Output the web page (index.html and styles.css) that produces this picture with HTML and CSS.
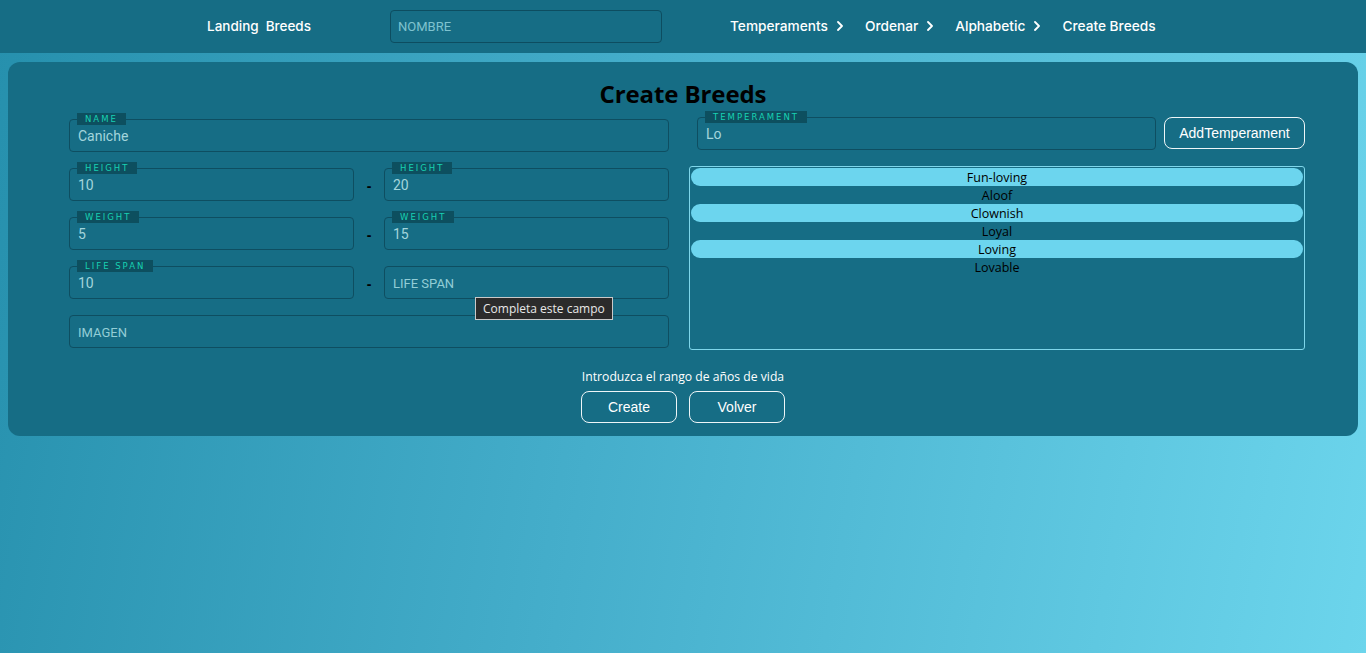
FILE: index.html
```html
<!DOCTYPE html>
<html lang="es">
<head>
<meta charset="utf-8">
<title>Create Breeds</title>
<link rel="stylesheet" href="styles.css">
</head>
<body>
<header class="topbar">
  <div class="brand">
    <span>Landing</span>
    <span>Breeds</span>
  </div>
  <input class="search" type="text" placeholder="NOMBRE">
  <nav class="nav">
    <span class="nav-item">Temperaments <svg class="chev" viewBox="0 0 6 10" width="6" height="10"><path d="M1 1l4 4-4 4" fill="none" stroke="#fff" stroke-width="1.8" stroke-linecap="round" stroke-linejoin="round"/></svg></span>
    <span class="nav-item">Ordenar <svg class="chev" viewBox="0 0 6 10" width="6" height="10"><path d="M1 1l4 4-4 4" fill="none" stroke="#fff" stroke-width="1.8" stroke-linecap="round" stroke-linejoin="round"/></svg></span>
    <span class="nav-item">Alphabetic <svg class="chev" viewBox="0 0 6 10" width="6" height="10"><path d="M1 1l4 4-4 4" fill="none" stroke="#fff" stroke-width="1.8" stroke-linecap="round" stroke-linejoin="round"/></svg></span>
    <span class="nav-item">Create Breeds</span>
  </nav>
</header>

<main class="page">
  <section class="card">
    <h1 class="title">Create Breeds</h1>
    <div class="form-grid">
      <div class="col-left">
        <div class="field">
          <span class="tag">Name</span>
          <input class="inp" type="text" value="Caniche">
        </div>
        <div class="pair">
          <div class="field"><span class="tag">Height</span><input class="inp" type="text" value="10"></div>
          <span class="dash">-</span>
          <div class="field"><span class="tag">Height</span><input class="inp" type="text" value="20"></div>
        </div>
        <div class="pair">
          <div class="field"><span class="tag">Weight</span><input class="inp" type="text" value="5"></div>
          <span class="dash">-</span>
          <div class="field"><span class="tag">Weight</span><input class="inp" type="text" value="15"></div>
        </div>
        <div class="pair">
          <div class="field"><span class="tag">Life span</span><input class="inp" type="text" value="10"></div>
          <span class="dash">-</span>
          <div class="field">
            <input class="inp" type="text" placeholder="LIFE SPAN">
            <span class="tooltip">Completa este campo</span>
          </div>
        </div>
        <div class="field">
          <input class="inp" type="text" placeholder="IMAGEN">
        </div>
      </div>
      <div class="col-right">
        <div class="temp-row">
          <div class="field temp-field">
            <span class="tag">Temperament</span>
            <input class="inp" type="text" value="Lo">
          </div>
          <button class="btn btn-add">AddTemperament</button>
        </div>
        <ul class="list">
          <li class="hl">Fun-loving</li>
          <li>Aloof</li>
          <li class="hl">Clownish</li>
          <li>Loyal</li>
          <li class="hl">Loving</li>
          <li>Lovable</li>
        </ul>
      </div>
    </div>
    <p class="hint">Introduzca el rango de años de vida</p>
    <div class="actions">
      <button class="btn btn-act">Create</button>
      <button class="btn btn-act">Volver</button>
    </div>
  </section>
</main>
</body>
</html>
```

FILE: styles.css
```css
* { box-sizing: border-box; }

html, body { height: 100%; }

body {
  margin: 0;
  min-height: 653px;
  background: linear-gradient(100deg, #2690ad 0%, #45aecb 45%, #6cd5ec 100%);
  font-family: "Liberation Sans", Arial, sans-serif;
}

.topbar {
  height: 53px;
  background: #166d85;
  display: flex;
  align-items: center;
  padding-left: 207px;
}

.brand {
  display: flex;
  gap: 7px;
  width: 183px;
  font-family: "Inter", "Noto Sans", sans-serif;
  font-size: 13.5px;
  font-weight: 500;
  color: #ffffff;
  margin-top: -2px;
}

.search {
  width: 272px;
  height: 33px;
  margin-top: 0;
  background: transparent;
  border: 1px solid #0d4d60;
  border-radius: 4px;
  padding: 0 7px;
  font-family: "Roboto", sans-serif;
  font-size: 13px;
  color: #9fd6de;
  outline: none;
}
.search::placeholder { color: #7fc3cf; }

.nav {
  display: flex;
  align-items: center;
  margin-left: 68px;
  gap: 22px;
  font-family: "Inter", "Noto Sans", sans-serif;
  font-size: 13.7px;
  font-weight: 500;
  color: #ffffff;
  margin-top: -2px;
}
.nav-item { display: flex; align-items: center; gap: 9px; }
.chev { display: block; }

.page {
  padding: 9px 8px;
}

.card {
  background: #166d85;
  border-radius: 12px;
  padding: 18px 53px 13px 61px;
  height: 374px;
}

.title {
  margin: 0;
  padding-right: 8px;
  text-align: center;
  font-family: "Open Sans", "Noto Sans", sans-serif;
  font-weight: 700;
  font-size: 24px;
  line-height: 28px;
  color: #000;
  letter-spacing: -0.1px;
}

.form-grid {
  display: grid;
  grid-template-columns: 600px 616px;
  column-gap: 20px;
  margin-top: 9px;
}

.col-left {
  display: flex;
  flex-direction: column;
  gap: 16px;
  padding-top: 2px;
}

.pair {
  display: grid;
  grid-template-columns: 285px 30px 285px;
  align-items: center;
}

.dash {
  text-align: center;
  color: #000;
  font-weight: 700;
  font-size: 14px;
  padding-top: 2px;
}

.field {
  position: relative;
}

.inp {
  display: block;
  width: 100%;
  height: 33px;
  background: transparent;
  border: 1px solid #0e4e61;
  border-radius: 4px;
  padding: 1px 8px 0;
  font-family: "Roboto", sans-serif;
  font-size: 14px;
  color: #a3d5dc;
  outline: none;
}
.inp::placeholder { color: #93cdd6; font-size: 13px; }

.tag {
  position: absolute;
  left: 8px;
  top: -6px;
  height: 12px;
  padding: 0 8px;
  background: #0d4f5f;
  color: #18d1b2;
  font-family: "DejaVu Sans", sans-serif;
  font-size: 8.5px;
  line-height: 12px;
  letter-spacing: 2px;
  text-transform: uppercase;
}

.tooltip {
  position: absolute;
  left: 91px;
  top: 31px;
  background: #2b2b2b;
  color: #e8e8e8;
  border: 1px solid #c9c9c9;
  font-family: "Open Sans", "Noto Sans", sans-serif;
  font-size: 12px;
  line-height: 21px;
  padding: 0 7px;
  white-space: nowrap;
  z-index: 2;
}

.col-right {
  display: flex;
  flex-direction: column;
  gap: 16px;
}

.temp-row {
  display: flex;
  gap: 8px;
  padding-left: 8px;
}
.temp-field { flex: 0 0 459px; }

.btn {
  background: transparent;
  border: 1px solid #eef6f8;
  border-radius: 8px;
  color: #ffffff;
  font-family: "Liberation Sans", Arial, sans-serif;
  font-size: 14px;
  cursor: pointer;
}
.btn-add {
  width: 141px;
  height: 32px;
}

.list {
  list-style: none;
  margin: 0;
  height: 184px;
  border: 1px solid #7fd6ea;
  border-radius: 3px;
  padding: 1px;
  font-family: "Open Sans", "Noto Sans", sans-serif;
  font-size: 12.5px;
  color: #000;
}
.list li {
  height: 18px;
  line-height: 19px;
  text-align: center;
}
.list li.hl {
  background: #6cd5ee;
  border-radius: 9px;
}

.hint {
  margin: 19px 0 0;
  padding-right: 8px;
  text-align: center;
  color: #ffffff;
  font-family: "Open Sans", "Noto Sans", sans-serif;
  font-size: 12.2px;
  line-height: 16px;
}

.actions {
  display: flex;
  justify-content: center;
  gap: 12px;
  margin-top: 6px;
  padding-right: 8px;
}
.btn-act {
  width: 96px;
  height: 32px;
}
```
